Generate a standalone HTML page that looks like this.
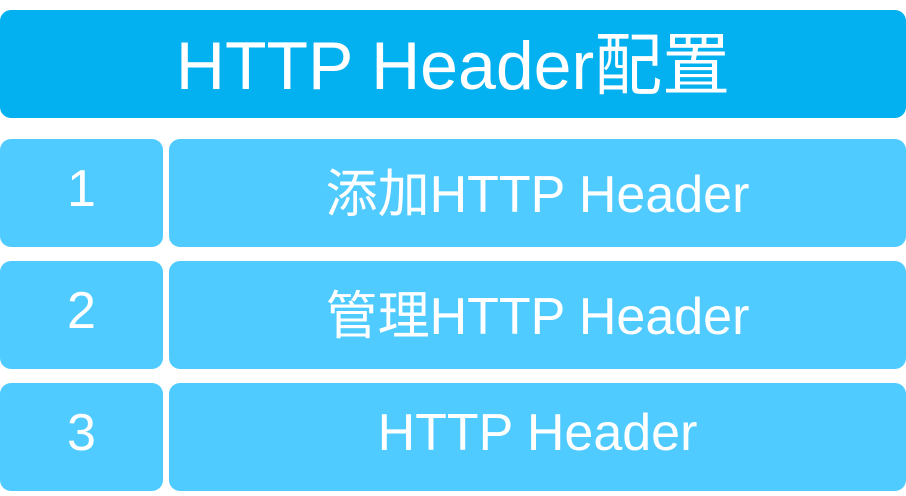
<!DOCTYPE html>
<html><head><meta charset="utf-8"><style>
body{margin:0;width:906px;height:496px;background:#fff;font-family:"Liberation Sans","Noto Sans CJK SC",sans-serif;color:#fff;position:relative;overflow:hidden}
div.b{position:absolute;display:flex;align-items:center;justify-content:center;border-radius:11px;background:#50cbff;font-size:52px;box-sizing:border-box;padding-bottom:8px}
#h{left:0;top:10px;width:906px;height:108px;background:#03b0f0;font-size:68px;padding-bottom:10px}
</style></head><body>
<div class="b" id="h">HTTP Header配置</div>
<div class="b" style="left:0;top:139px;width:163px;height:108px">1</div>
<div class="b" style="left:169px;top:139px;width:737px;height:108px">添加HTTP Header</div>
<div class="b" style="left:0;top:261px;width:163px;height:108px">2</div>
<div class="b" style="left:169px;top:261px;width:737px;height:108px">管理HTTP Header</div>
<div class="b" style="left:0;top:383px;width:163px;height:108px">3</div>
<div class="b" style="left:169px;top:383px;width:737px;height:108px">HTTP Header</div>
</body></html>
